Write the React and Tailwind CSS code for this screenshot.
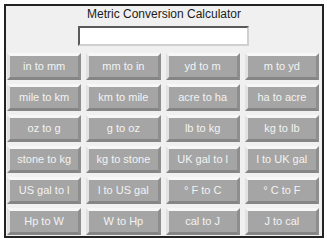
import React from "react";

const buttons = [
  "in to mm", "mm to in", "yd to m", "m to yd",
  "mile to km", "km to mile", "acre to ha", "ha to acre",
  "oz to g", "g to oz", "lb to kg", "kg to lb",
  "stone to kg", "kg to stone", "UK gal to l", "l to UK gal",
  "US gal to l", "l to US gal", "° F to C", "° C to F",
  "Hp to W", "W to Hp", "cal to J", "J to cal",
];

export default function App() {
  return (
    <div className="w-[327px] h-[242px] bg-white pt-[4px] pl-[4px]" style={{ fontFamily: '"Liberation Sans", Arial, sans-serif' }}>
      <div className="w-[320px] h-[234px] border-2 border-[#222] bg-[#f0f0f0] flex flex-col items-stretch">
        <div className="h-[16px] leading-[16px] text-[12px] text-[#1c1c1c] text-center">
          Metric Conversion Calculator
        </div>
        <div className="flex justify-center mt-[4px] pr-[1px]">
          <input
            type="text"
            className="w-[171px] h-[20px] bg-white border-2 border-t-[#5a5a5a] border-l-[#5a5a5a] border-r-[#d0d0d0] border-b-[#d0d0d0] outline-none"
          />
        </div>
        <div className="grid grid-cols-4 gap-x-[5px] gap-y-[4px] mt-[7px] pl-[1px] pr-[3px]">
          {buttons.map((label) => (
            <button
              key={label}
              className="h-[27px] bg-[#a5a5a5] border-[3px] border-t-[#f7f7f7] border-l-[#e2e2e2] border-r-[#8e8e8e] border-b-[#858585] text-[11px] text-[#f3f3f3] leading-none flex items-center justify-center whitespace-nowrap"
            >
              {label}
            </button>
          ))}
        </div>
      </div>
    </div>
  );
}
